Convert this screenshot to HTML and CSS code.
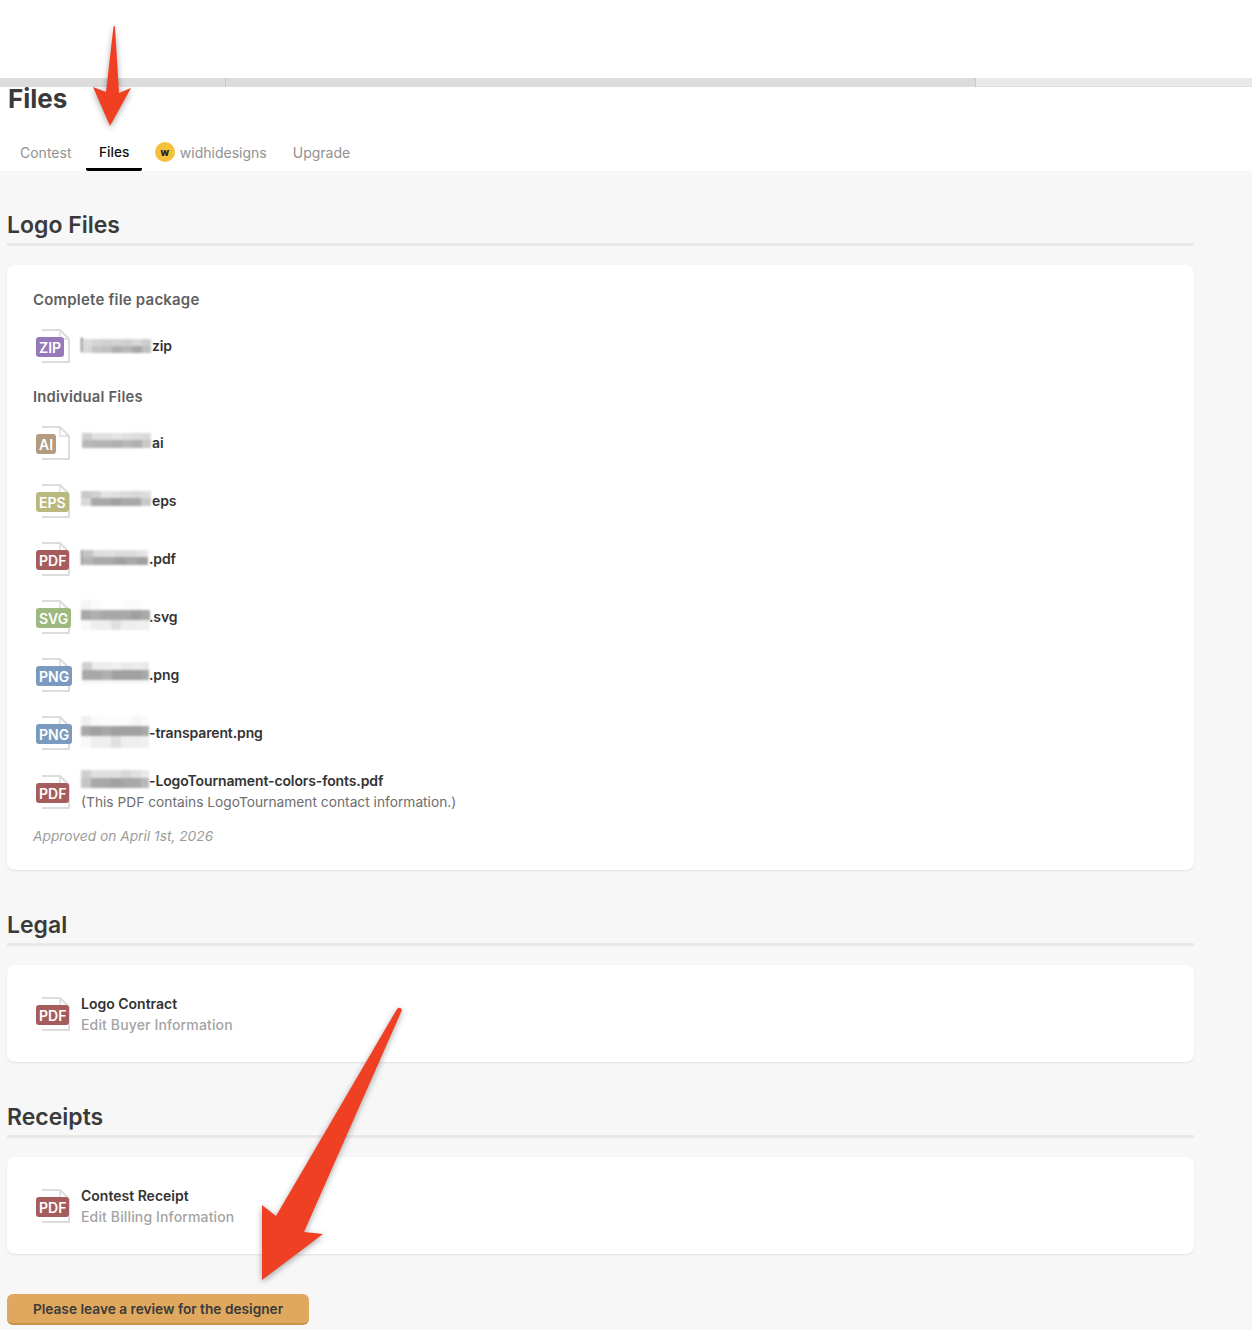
FILE: index.html
```html
<!DOCTYPE html>
<html lang="en">
<head>
<meta charset="utf-8">
<title>Files</title>
<link rel="stylesheet" href="styles.css">
</head>
<body>
<svg class="sprite" aria-hidden="true"><symbol id="page" viewBox="0 0 34 34"><path d="M6 1H24L33 10V33H6" fill="#fff" stroke="#dcdcdc" stroke-width="2" stroke-linejoin="round"/><path d="M24 1V10H33" fill="none" stroke="#dcdcdc" stroke-width="1.5"/></symbol></svg>

<header class="masthead">
  <div class="topbar"><span class="seg seg-a"></span><span class="seg seg-b"></span><span class="seg seg-c"></span></div>
  <h1 class="title">Files</h1>
  <nav class="tabs">
    <a class="tab">Contest</a>
    <a class="tab tab-active">Files</a>
    <a class="tab tab-user"><span class="avatar">w</span>widhidesigns</a>
    <a class="tab">Upgrade</a>
  </nav>
</header>

<main class="content">
  <section class="group">
    <h2 class="group-title">Logo Files</h2>
    <div class="card card-files">
      <h3 class="sub-title">Complete file package</h3>
      <div class="file">
        <span class="file-icon"><svg class="page"><use href="#page"/></svg><span class="tile t-zip">ZIP</span></span>
        <div class="file-text"><div class="name"><svg class="mosaic" viewBox="0 0 70 16"><rect x="0" y="1" width="2" height="14" fill="#555"/><rect x="1" y="2" width="10" height="7" fill="#dcdcdc"/><rect x="11" y="2" width="10" height="7" fill="#d4d4d4"/><rect x="21" y="2" width="10" height="7" fill="#d0d0d0"/><rect x="31" y="2" width="10" height="7" fill="#d4d4d4"/><rect x="41" y="2" width="10" height="7" fill="#d0d0d0"/><rect x="51" y="2" width="10" height="7" fill="#d8d8d8"/><rect x="61" y="2" width="9" height="7" fill="#cdcdcd"/><rect x="1" y="9" width="10" height="7" fill="#d8d8d8"/><rect x="11" y="9" width="10" height="7" fill="#c4c4c4"/><rect x="21" y="9" width="10" height="7" fill="#c0c0c0"/><rect x="31" y="9" width="10" height="7" fill="#b0b0b0"/><rect x="41" y="9" width="10" height="7" fill="#b8b8b8"/><rect x="51" y="9" width="10" height="7" fill="#a8a8a8"/><rect x="61" y="9" width="9" height="7" fill="#c0c0c0"/></svg>zip</div></div>
      </div>
      <h3 class="sub-title sub-title-small">Individual Files</h3>
      <div class="file">
        <span class="file-icon"><svg class="page"><use href="#page"/></svg><span class="tile t-ai">AI</span></span>
        <div class="file-text"><div class="name"><svg class="mosaic" viewBox="0 0 70 16"><rect x="1" y="-1" width="10" height="7" fill="#cecece"/><rect x="11" y="-1" width="10" height="7" fill="#e0e0e0"/><rect x="21" y="-1" width="10" height="7" fill="#e0e0e0"/><rect x="31" y="-1" width="10" height="7" fill="#e4e4e4"/><rect x="41" y="-1" width="10" height="7" fill="#e0e0e0"/><rect x="51" y="-1" width="10" height="7" fill="#dcdcdc"/><rect x="61" y="-1" width="9" height="7" fill="#d8d8d8"/><rect x="1" y="6" width="10" height="8" fill="#b8b8b8"/><rect x="11" y="6" width="10" height="8" fill="#b4b4b4"/><rect x="21" y="6" width="10" height="8" fill="#b4b4b4"/><rect x="31" y="6" width="10" height="8" fill="#b0b0b0"/><rect x="41" y="6" width="10" height="8" fill="#b8b8b8"/><rect x="51" y="6" width="10" height="8" fill="#b0b0b0"/><rect x="61" y="6" width="9" height="8" fill="#c8c8c8"/></svg>ai</div></div>
      </div>
      <div class="file">
        <span class="file-icon"><svg class="page"><use href="#page"/></svg><span class="tile t-eps">EPS</span></span>
        <div class="file-text"><div class="name"><svg class="mosaic" viewBox="0 0 70 16"><rect x="0" y="-1" width="10" height="7" fill="#c8c8c8"/><rect x="10" y="-1" width="10" height="7" fill="#d0d0d0"/><rect x="20" y="-1" width="10" height="7" fill="#e4e4e4"/><rect x="30" y="-1" width="10" height="7" fill="#e0e0e0"/><rect x="40" y="-1" width="10" height="7" fill="#dcdcdc"/><rect x="50" y="-1" width="10" height="7" fill="#d8d8d8"/><rect x="60" y="-1" width="10" height="7" fill="#dcdcdc"/><rect x="0" y="6" width="10" height="8" fill="#d8d8d8"/><rect x="10" y="6" width="10" height="8" fill="#a8a8a8"/><rect x="20" y="6" width="10" height="8" fill="#a8a8a8"/><rect x="30" y="6" width="10" height="8" fill="#a0a0a0"/><rect x="40" y="6" width="10" height="8" fill="#a8a8a8"/><rect x="50" y="6" width="10" height="8" fill="#a8a8a8"/><rect x="60" y="6" width="10" height="8" fill="#c8c8c8"/></svg>eps</div></div>
      </div>
      <div class="file">
        <span class="file-icon"><svg class="page"><use href="#page"/></svg><span class="tile t-pdf">PDF</span></span>
        <div class="file-text"><div class="name"><svg class="mosaic mosaic-short" viewBox="0 0 70 16"><rect x="0" y="0" width="1.5" height="15" fill="#777"/><rect x="1" y="0" width="11" height="7" fill="#c4c4c4"/><rect x="12" y="0" width="11" height="7" fill="#dcdcdc"/><rect x="23" y="0" width="11" height="7" fill="#e0e0e0"/><rect x="34" y="0" width="11" height="7" fill="#dcdcdc"/><rect x="45" y="0" width="11" height="7" fill="#dcdcdc"/><rect x="56" y="0" width="11" height="7" fill="#e4e4e4"/><rect x="1" y="7" width="11" height="8" fill="#b4b4b4"/><rect x="12" y="7" width="11" height="8" fill="#a8a8a8"/><rect x="23" y="7" width="11" height="8" fill="#a8a8a8"/><rect x="34" y="7" width="11" height="8" fill="#a0a0a0"/><rect x="45" y="7" width="11" height="8" fill="#a8a8a8"/><rect x="56" y="7" width="11" height="8" fill="#a0a0a0"/></svg>.pdf</div></div>
      </div>
      <div class="file">
        <span class="file-icon"><svg class="page"><use href="#page"/></svg><span class="tile t-svg">SVG</span></span>
        <div class="file-text"><div class="name"><svg class="mosaic mosaic-short" viewBox="0 0 70 16"><rect x="0" y="-8" width="10" height="10" fill="#f4f4f4"/><rect x="10" y="-8" width="10" height="10" fill="#fbfbfb"/><rect x="40" y="-8" width="10" height="10" fill="#fbfbfb"/><rect x="50" y="-8" width="10" height="10" fill="#fbfbfb"/><rect x="0" y="2" width="10" height="10" fill="#a8a8a8"/><rect x="10" y="2" width="10" height="10" fill="#b0b0b0"/><rect x="20" y="2" width="10" height="10" fill="#a8a8a8"/><rect x="30" y="2" width="10" height="10" fill="#a8a8a8"/><rect x="40" y="2" width="10" height="10" fill="#a8a8a8"/><rect x="50" y="2" width="10" height="10" fill="#a0a0a0"/><rect x="60" y="2" width="9" height="10" fill="#a8a8a8"/><rect x="0" y="12" width="10" height="10" fill="#f8f8f8"/><rect x="10" y="12" width="10" height="10" fill="#eeeeee"/><rect x="20" y="12" width="10" height="10" fill="#eeeeee"/><rect x="30" y="12" width="10" height="10" fill="#e0e0e0"/><rect x="40" y="12" width="10" height="10" fill="#eeeeee"/><rect x="50" y="12" width="10" height="10" fill="#eeeeee"/><rect x="60" y="12" width="9" height="10" fill="#f0f0f0"/></svg>.svg</div></div>
      </div>
      <div class="file">
        <span class="file-icon"><svg class="page"><use href="#page"/></svg><span class="tile t-png">PNG</span></span>
        <div class="file-text"><div class="name"><svg class="mosaic mosaic-short" viewBox="0 0 70 16"><rect x="1" y="-4" width="10" height="8" fill="#d0d0d0"/><rect x="11" y="-4" width="10" height="8" fill="#eeeeee"/><rect x="21" y="-4" width="10" height="8" fill="#eeeeee"/><rect x="31" y="-4" width="10" height="8" fill="#f0f0f0"/><rect x="41" y="-4" width="10" height="8" fill="#e8e8e8"/><rect x="51" y="-4" width="10" height="8" fill="#ececec"/><rect x="61" y="-4" width="7" height="8" fill="#e8e8e8"/><rect x="1" y="4" width="10" height="10" fill="#a8a8a8"/><rect x="11" y="4" width="10" height="10" fill="#a8a8a8"/><rect x="21" y="4" width="10" height="10" fill="#b0b0b0"/><rect x="31" y="4" width="10" height="10" fill="#a0a0a0"/><rect x="41" y="4" width="10" height="10" fill="#a0a0a0"/><rect x="51" y="4" width="10" height="10" fill="#a0a0a0"/><rect x="61" y="4" width="7" height="10" fill="#a8a8a8"/><rect x="1" y="14" width="67" height="4" fill="#f8f8f8"/></svg>.png</div></div>
      </div>
      <div class="file">
        <span class="file-icon"><svg class="page"><use href="#page"/></svg><span class="tile t-png">PNG</span></span>
        <div class="file-text"><div class="name"><svg class="mosaic mosaic-short" viewBox="0 0 70 16"><rect x="0" y="-8" width="10" height="10" fill="#f0f0f0"/><rect x="10" y="-8" width="10" height="10" fill="#fafafa"/><rect x="20" y="-8" width="30" height="10" fill="#fcfcfc"/><rect x="50" y="-8" width="10" height="10" fill="#f6f6f6"/><rect x="60" y="-8" width="8" height="10" fill="#fafafa"/><rect x="0" y="2" width="10" height="10" fill="#a8a8a8"/><rect x="10" y="2" width="10" height="10" fill="#a0a0a0"/><rect x="20" y="2" width="10" height="10" fill="#a8a8a8"/><rect x="30" y="2" width="10" height="10" fill="#a0a0a0"/><rect x="40" y="2" width="10" height="10" fill="#a0a0a0"/><rect x="50" y="2" width="10" height="10" fill="#a0a0a0"/><rect x="60" y="2" width="8" height="10" fill="#a8a8a8"/><rect x="0" y="12" width="10" height="12" fill="#f8f8f8"/><rect x="10" y="12" width="10" height="12" fill="#eeeeee"/><rect x="20" y="12" width="10" height="12" fill="#eeeeee"/><rect x="30" y="12" width="10" height="12" fill="#e0e0e0"/><rect x="40" y="12" width="10" height="12" fill="#eeeeee"/><rect x="50" y="12" width="10" height="12" fill="#eeeeee"/><rect x="60" y="12" width="8" height="12" fill="#f0f0f0"/></svg>-transparent.png</div></div>
      </div>
      <div class="file file-tall">
        <span class="file-icon"><svg class="page"><use href="#page"/></svg><span class="tile t-pdf">PDF</span></span>
        <div class="file-text"><div class="name"><svg class="mosaic mosaic-short" viewBox="0 0 70 16"><rect x="0" y="-3" width="10" height="8" fill="#d0d0d0"/><rect x="10" y="-3" width="10" height="8" fill="#e0e0e0"/><rect x="20" y="-3" width="10" height="8" fill="#e0e0e0"/><rect x="30" y="-3" width="10" height="8" fill="#e0e0e0"/><rect x="40" y="-3" width="10" height="8" fill="#d8d8d8"/><rect x="50" y="-3" width="10" height="8" fill="#e0e0e0"/><rect x="60" y="-3" width="8" height="8" fill="#e8e8e8"/><rect x="0" y="5" width="10" height="10" fill="#c4c4c4"/><rect x="10" y="5" width="10" height="10" fill="#a8a8a8"/><rect x="20" y="5" width="10" height="10" fill="#a8a8a8"/><rect x="30" y="5" width="10" height="10" fill="#a0a0a0"/><rect x="40" y="5" width="10" height="10" fill="#a8a8a8"/><rect x="50" y="5" width="10" height="10" fill="#a8a8a8"/><rect x="60" y="5" width="8" height="10" fill="#b8b8b8"/></svg>-LogoTournament-colors-fonts.pdf</div><div class="note">(This PDF contains LogoTournament contact information.)</div></div>
      </div>
      <p class="approved">Approved on April 1st, 2026</p>
    </div>
  </section>

  <section class="group">
    <h2 class="group-title">Legal</h2>
    <div class="card">
      <div class="file">
        <span class="file-icon"><svg class="page"><use href="#page"/></svg><span class="tile t-pdf">PDF</span></span>
        <div class="file-text"><div class="name">Logo Contract</div><div class="edit">Edit Buyer Information</div></div>
      </div>
    </div>
  </section>

  <section class="group group-last">
    <h2 class="group-title">Receipts</h2>
    <div class="card">
      <div class="file">
        <span class="file-icon"><svg class="page"><use href="#page"/></svg><span class="tile t-pdf">PDF</span></span>
        <div class="file-text"><div class="name">Contest Receipt</div><div class="edit">Edit Billing Information</div></div>
      </div>
    </div>
  </section>

  <a class="review">Please leave a review for the designer</a>
</main>

<svg class="arrows" viewBox="0 0 1252 1330" aria-hidden="true">
  <path class="arrow" d="M113.5 26.5Q114.3 25.5 115 26.5L119 93L131 88L110 126L93 87L106 92Z"/>
  <path class="arrow" d="M397 1009Q400 1006 402 1010L304 1232L323 1234L262 1280V1205L276 1216Z"/>
</svg>
</body>
</html>
```

FILE: styles.css
```css
* { box-sizing: border-box; }
html, body { margin: 0; padding: 0; }
body {
  position: relative;
  width: 1252px;
  height: 1330px;
  overflow: hidden;
  background: #f7f7f7;
  color: #333;
  font-family: Inter, "Liberation Sans", sans-serif;
}
.sprite { position: absolute; width: 0; height: 0; }

.masthead { background: #fff; padding-top: 78px; height: 171px; }
.topbar { display: flex; height: 9px; }
.seg { display: block; height: 100%; }
.seg-a { width: 226px; background: #dcdcdc; border-right: 1px solid #c8c8c8; }
.seg-b { width: 750px; background: #dcdcdc; border-right: 1px solid #c8c8c8; }
.seg-c { flex: 1; background: #e9e9e9; border-bottom: 1px solid #dedede; }
.title {
  margin: 0;
  padding-left: 8px;
  font-size: 26px;
  line-height: 24px;
  font-weight: 700;
  color: #3a3a3a;
}
.tabs { display: flex; margin: 19px 0 0 7px; height: 41px; }
.tab {
  display: flex;
  align-items: center;
  height: 41px;
  padding: 6px 13px 0;
  border-bottom: 3px solid transparent;
  border-radius: 2px;
  font-size: 14px;
  color: #919191;
}
.tab:first-child { padding-right: 15px; }
.tab-active { padding-left: 12.5px; color: #111; font-size: 13.7px; font-weight: 500; border-bottom-color: #000; }
.tab-user { gap: 5px; padding-left: 12.5px; }
.avatar {
  display: flex;
  align-items: center;
  justify-content: center;
  width: 20px;
  height: 20px;
  border-radius: 50%;
  background: #f5c13d;
  color: #222;
  font-size: 10px;
  font-weight: 800;
}

.content { width: 1194px; padding-left: 7px; }
.group { margin-bottom: 41px; }
.group:first-child { padding-top: 40px; }
.group-last { margin-bottom: 40px; }
.group-title {
  margin: 0;
  height: 35px;
  border-bottom: 3px solid #e8e8e8;
  font-size: 23px;
  line-height: 28px;
  font-weight: 600;
  color: #3a3a3a;
}
.card {
  margin-top: 19px;
  padding: 28px 26px 27px;
  background: #fff;
  border-radius: 8px;
  box-shadow: 0 1px 2px rgba(0, 0, 0, .09);
}
.card-files { padding-top: 26px; padding-bottom: 24px; }
.sub-title {
  margin: 0 0 20px;
  font-size: 15px;
  line-height: 18px;
  font-weight: 600;
  letter-spacing: .2px;
  color: #5f5f5f;
}
.sub-title-small { margin-top: 25px; font-size: 14.8px; }
.file { display: flex; align-items: center; min-height: 42px; margin-left: 3px; }
.card-files .file { min-height: 34px; margin-bottom: 24px; }
.card-files .file-tall { margin-top: -4px; }
.file-icon { position: relative; display: block; flex: none; width: 45px; height: 34px; }
.page { display: block; width: 34px; height: 34px; }
.tile {
  position: absolute;
  left: 0;
  top: 8px;
  height: 20px;
  padding: 0 3px;
  border-radius: 3px;
  color: #fff;
  font-size: 14px;
  line-height: 22px;
  font-weight: 600;
}
.t-zip { background: #9579b9; }
.t-ai { background: #b39b7f; }
.t-eps { background: #b9b97f; }
.t-pdf { background: #a55c5c; }
.t-svg { background: #9db97f; }
.t-png { background: #7b9abf; }
.file-text { display: flex; flex-direction: column; }
.name {
  display: flex;
  align-items: center;
  height: 21px;
  font-size: 14px;
  font-weight: 600;
  color: #333;
}
.card-files .name { letter-spacing: -.12px; padding-bottom: 2px; }
.card-files .file-tall .name { padding-bottom: 0; }
.mosaic { flex: none; width: 70px; height: 16px; margin-right: 1px; overflow: visible; filter: blur(.8px); }
.mosaic-short { margin-right: -2px; }
.note { margin-top: 1px; font-size: 13.75px; line-height: 21px; color: #6e6e6e; }
.edit { font-size: 14px; line-height: 21px; font-weight: 500; letter-spacing: .14px; color: #a3a3a3; }
.approved {
  margin: -11px 0 0;
  font-size: 13.75px;
  line-height: 20px;
  font-style: italic;
  color: #9b9b9b;
}
.review {
  display: flex;
  align-items: center;
  justify-content: center;
  width: 302px;
  height: 31px;
  border-bottom: 2px solid #c9924a;
  border-radius: 6px;
  background: #dfa85e;
  color: #3a3a3a;
  font-size: 13.7px;
  font-weight: 600;
}

.arrows { position: absolute; left: 0; top: 0; width: 1252px; height: 1330px; pointer-events: none; }
.arrow { fill: #f04023; filter: drop-shadow(0 2px 3px rgba(0, 0, 0, .35)); }
```
